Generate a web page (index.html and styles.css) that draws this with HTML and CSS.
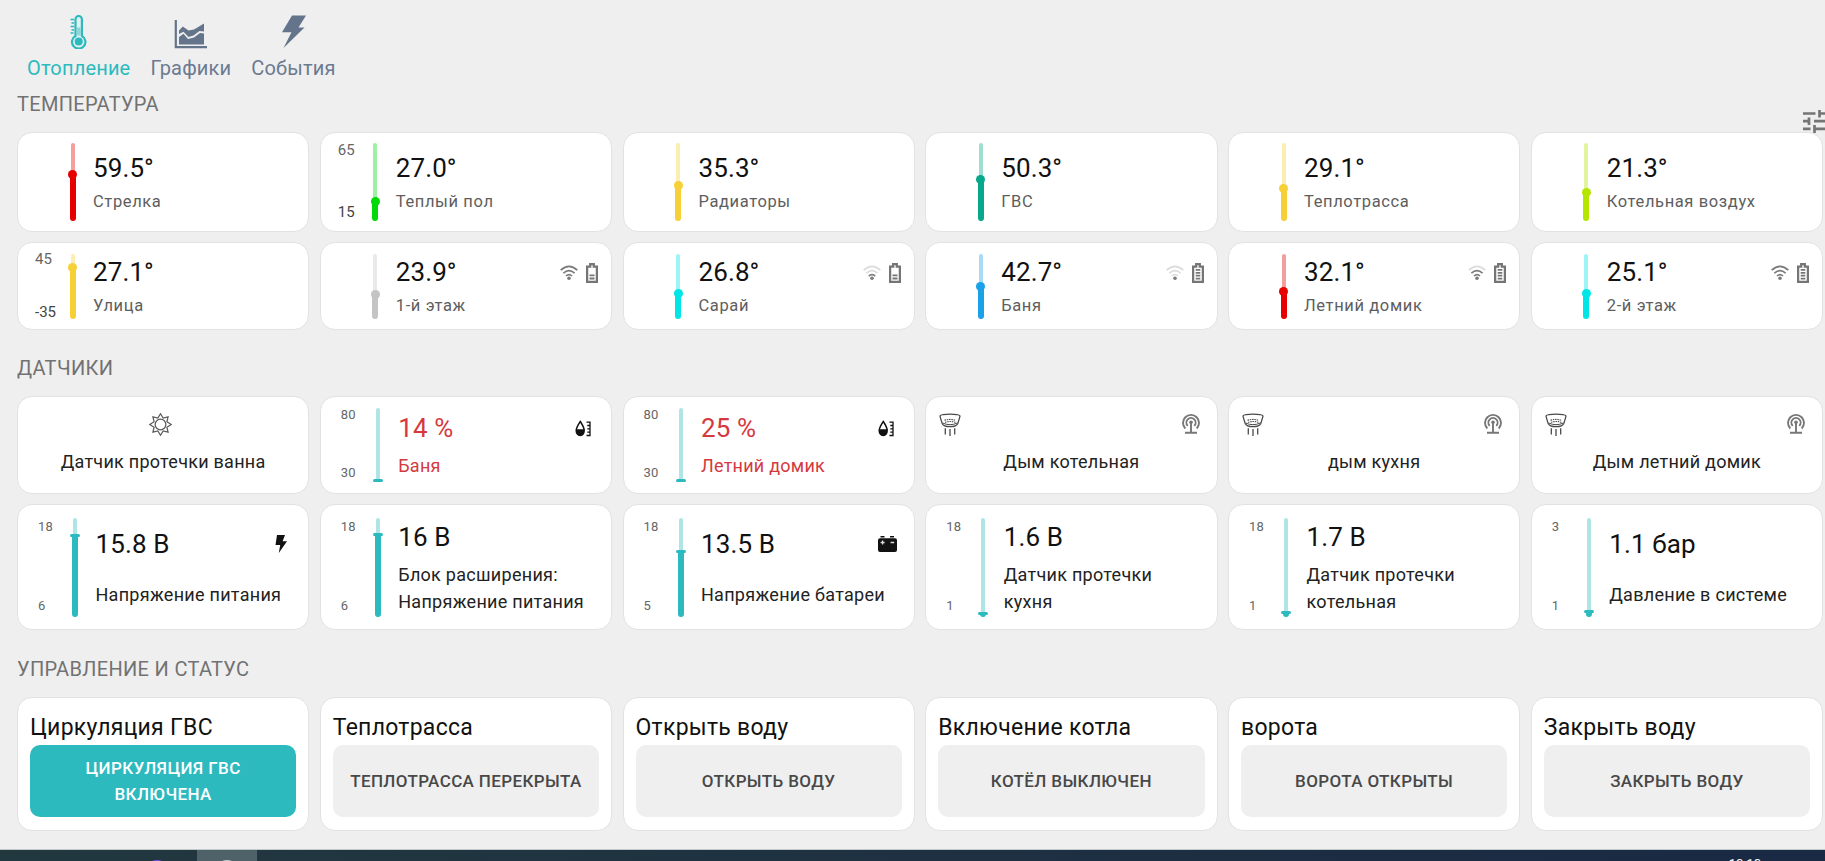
FILE: index.html
```html
<!DOCTYPE html>
<html lang="ru">
<head>
<meta charset="utf-8">
<title>Отопление</title>
<link rel="stylesheet" href="styles.css">
</head>
<body>
<svg class="defs" aria-hidden="true">
  <symbol id="wifi4" viewBox="0 0 18 16"><g fill="none" stroke="#7a7a7a" stroke-width="1.7"><path d="M.7 5.2Q9-2.6 17.3 5.2"/><path d="M3.4 8.2Q9 3 14.6 8.2"/><path d="M6 11Q9 8.2 12 11"/></g><circle cx="9" cy="13.3" r="1.8" fill="#7a7a7a"/></symbol>
  <symbol id="wifi3" viewBox="0 0 18 16"><g fill="none" stroke="#7a7a7a" stroke-width="1.7"><path stroke="#dcdcdc" d="M.7 5.2Q9-2.6 17.3 5.2"/><path d="M3.4 8.2Q9 3 14.6 8.2"/><path d="M6 11Q9 8.2 12 11"/></g><circle cx="9" cy="13.3" r="1.8" fill="#7a7a7a"/></symbol>
  <symbol id="wifi2" viewBox="0 0 18 16"><g fill="none" stroke="#dcdcdc" stroke-width="1.7"><path d="M.7 5.2Q9-2.6 17.3 5.2"/><path d="M3.4 8.2Q9 3 14.6 8.2"/><path stroke="#7a7a7a" d="M5.8 11Q9 8.2 12.2 11"/></g><circle cx="9" cy="13.3" r="1.8" fill="#7a7a7a"/></symbol>
  <symbol id="wifi1" viewBox="0 0 18 16"><g fill="none" stroke="#dcdcdc" stroke-width="1.7"><path d="M.7 5.2Q9-2.6 17.3 5.2"/><path d="M3.4 8.2Q9 3 14.6 8.2"/><path d="M6 11Q9 8.2 12 11"/></g><circle cx="9" cy="13.3" r="1.8" fill="#7a7a7a"/></symbol>
  <symbol id="bat2" viewBox="0 0 12 20"><path d="M4.200 1.200h3.600v2.400H10.900V18.900H1.100V3.600h3.100z" fill="none" stroke="#757575" stroke-width="2.300"/><path d="M3.500 12.400h5M3.500 15.500h5" stroke="#757575" stroke-width="1.800"/></symbol>
  <symbol id="bat4" viewBox="0 0 12 20"><path d="M4.200 1.200h3.600v2.400H10.900V18.900H1.100V3.600h3.100z" fill="none" stroke="#757575" stroke-width="2.300"/><path d="M3.700 6.900h4.600M3.700 9.800h4.600M3.700 12.700h4.600M3.700 15.600h4.600" stroke="#757575" stroke-width="1.700"/></symbol>
  <symbol id="drop" viewBox="0 0 16 17"><path d="M5.300 1.500C7.500 4.800 9.200 7.600 9.200 10.600a4 4.800 0 0 1-8 0C1.200 7.600 3.200 4.800 5.300 1.500z" fill="#fff" stroke="#111" stroke-width="1.500"/><path d="M1.600 9.300h7.400v2.200a3.700 4.300 0 0 1-7.400 0z" fill="#111"/><path d="M11.500 2.200h3.500v13.300h-3.500M12.300 5.500h2.700M12.300 8.800h2.700M12.300 12.100h2.700" fill="none" stroke="#111" stroke-width="1.300"/></symbol>
  <symbol id="bolt" viewBox="0 0 12 18"><path d="M2 0h8L7.600 6.300H12L3.800 18 5.200 10H.5z" fill="#111"/></symbol>
  <symbol id="accum" viewBox="0 0 19 16"><path d="M2 2.300h15a2 2 0 0 1 2 2V14a2 2 0 0 1-2 2H2a2 2 0 0 1-2-2V4.300a2 2 0 0 1 2-2z" fill="#111"/><path d="M2.500 .7h4M12 .7h4" stroke="#111" stroke-width="1.500"/><path d="M2.600 6.500h4M4.600 4.500v4M12.600 6.500h3.600" stroke="#ddd" stroke-width="1.300"/></symbol>
  <symbol id="antenna" viewBox="0 0 18 21"><g fill="none" stroke="#777" stroke-width="1.900"><path d="M3.300 15.500A8 8 0 1 1 14.700 15.500"/><path d="M5.700 12.800A4.600 4.600 0 1 1 12.300 12.800"/><path d="M9 9v10M3 19.800h12"/></g><circle cx="9" cy="9.300" r="1.800" fill="#777"/></symbol>
  <symbol id="smoke" viewBox="0 0 22 23"><g fill="none" stroke="#4a4a4a" stroke-width="1.300"><path d="M1 3.200C1 .3 21 .3 21 3.200Q20 7 18.800 10.500Q17.500 13.700 11 13.700T3.200 10.500Q2 7 1 3.200z"/><path d="M3.600 10Q11 13.400 18.400 10" stroke-width="1"/><path d="M5.500 7.300Q11 5.500 16.500 7.300M6 9.300Q11 7.800 16.500 9.300" stroke-dasharray="1.500 .8" stroke-width="1.100"/><path d="M6.300 15.300v6.200M11 16v7M15.700 15.300v6.200"/></g></symbol>
  <symbol id="sun" viewBox="0 0 24 24"><g fill="none" stroke="#5c5c5c" stroke-width="1.300"><circle cx="12" cy="12" r="5.600"/><path d="M12 .8l2.800 4.500 5.100-1.200-1.200 5.100 4.500 2.800-4.500 2.800 1.200 5.100-5.100-1.200L12 23.200l-2.800-4.500-5.100 1.200 1.200-5.100L.8 12l4.500-2.800-1.200-5.100 5.100 1.200z"/></g></symbol>
</svg>

<nav class="nav">
  <a class="tab active">
    <svg class="tab-icon" width="18" height="34" viewBox="0 0 18 34"><path d="M6.500 21V4.200a3.200 3.200 0 0 1 6.400 0V21a6.700 6.700 0 1 1-6.400 0z" fill="#e3f1f1" stroke="#2cbabf" stroke-width="2.200"/><path d="M7.700 12.500h4v8h-4z" fill="#8fd6d8"/><circle cx="9.700" cy="26.500" r="4" fill="#2cbabf"/><path d="M1.500 4.500h3.500M2.500 8h2.500M1.500 11.500h3.500M2.500 15h2.500M1.500 18h3" stroke="#2cbabf" stroke-width="1.300"/></svg>
    <span>Отопление</span>
  </a>
  <a class="tab">
    <svg class="tab-icon" width="33" height="34" viewBox="0 0 33 34"><path d="M1.800 5v27.200H33" fill="none" stroke="#64748b" stroke-width="2.200"/><path d="M5 19V15.500L8.800 11.500 14.500 15.500 20 14.500 30 8.500V16.500L25.500 16 19.500 20.500 14.500 22 9.500 16.800z" fill="#64748b"/><path d="M5 29.500V22L9.500 18.700 14 24 20 22.500 26 18 30 18.500V29.500z" fill="#64748b"/></svg>
    <span>Графики</span>
  </a>
  <a class="tab">
    <svg class="tab-icon" width="26" height="34" viewBox="0 0 26 34"><path d="M11 .5H25L17.500 12.500H23.500L2.500 33 10.500 17.300H1z" fill="#64748b"/></svg>
    <span>События</span>
  </a>
</nav>

<svg class="tune" width="27" height="23" viewBox="0 0 27 23"><path d="M0 3.500h12.500M16.500 3.500H27M16.500 0v7.500M0 11.200h6M11 11.200H27M6 7.500V15M0 18.800h7.500M11.500 18.800H27M11.500 15v8" fill="none" stroke="#757575" stroke-width="2.700"/></svg>

<main class="page">
  <h2 class="heading">ТЕМПЕРАТУРА</h2>
  <section class="grid temps">
    <article class="card temp"><div class="scale"></div><div class="bar red"><i style="height:46.500px"></i></div><div class="info"><b>59.5°</b><span>Стрелка</span></div></article>
    <article class="card temp"><div class="scale"><em>65</em><em>15</em></div><div class="bar green"><i style="height:19.500px"></i></div><div class="info"><b>27.0°</b><span>Теплый пол</span></div></article>
    <article class="card temp"><div class="scale"></div><div class="bar yellow"><i style="height:36px"></i></div><div class="info"><b>35.3°</b><span>Радиаторы</span></div></article>
    <article class="card temp"><div class="scale"></div><div class="bar emerald"><i style="height:42px"></i></div><div class="info"><b>50.3°</b><span>ГВС</span></div></article>
    <article class="card temp"><div class="scale"></div><div class="bar yellow"><i style="height:32.500px"></i></div><div class="info"><b>29.1°</b><span>Теплотрасса</span></div></article>
    <article class="card temp"><div class="scale"></div><div class="bar lime"><i style="height:28.500px"></i></div><div class="info"><b>21.3°</b><span>Котельная воздух</span></div></article>

    <article class="card temp low"><div class="scale"><em>45</em><em>-35</em></div><div class="bar yellow"><i style="height:51px"></i></div><div class="info"><b>27.1°</b><span>Улица</span></div></article>
    <article class="card temp low"><div class="scale"></div><div class="bar gray"><i style="height:24px"></i></div><div class="info"><b>23.9°</b><span>1-й этаж</span></div><div class="state"><svg width="18" height="16"><use href="#wifi4"/></svg><svg width="12" height="20"><use href="#bat2"/></svg></div></article>
    <article class="card temp low"><div class="scale"></div><div class="bar cyan"><i style="height:25px"></i></div><div class="info"><b>26.8°</b><span>Сарай</span></div><div class="state"><svg width="18" height="16"><use href="#wifi2"/></svg><svg width="12" height="20"><use href="#bat2"/></svg></div></article>
    <article class="card temp low"><div class="scale"></div><div class="bar blue"><i style="height:32px"></i></div><div class="info"><b>42.7°</b><span>Баня</span></div><div class="state"><svg width="18" height="16"><use href="#wifi1"/></svg><svg width="12" height="20"><use href="#bat4"/></svg></div></article>
    <article class="card temp low"><div class="scale"></div><div class="bar red"><i style="height:27px"></i></div><div class="info"><b>32.1°</b><span>Летний домик</span></div><div class="state"><svg width="18" height="16"><use href="#wifi3"/></svg><svg width="12" height="20"><use href="#bat4"/></svg></div></article>
    <article class="card temp low"><div class="scale"></div><div class="bar cyan"><i style="height:25px"></i></div><div class="info"><b>25.1°</b><span>2-й этаж</span></div><div class="state"><svg width="18" height="16"><use href="#wifi4"/></svg><svg width="12" height="20"><use href="#bat4"/></svg></div></article>
  </section>

  <h2 class="heading">ДАТЧИКИ</h2>
  <section class="grid sensors">
    <article class="card alarm"><div class="icons single"><svg width="23" height="23"><use href="#sun"/></svg></div><p>Датчик протечки ванна</p></article>
    <article class="card meter humid"><div class="scale"><em>80</em><em>30</em></div><div class="bar teal"><i style="height:3px"></i></div><div class="info"><b>14 %</b><span>Баня</span></div><svg class="mark" width="16" height="17"><use href="#drop"/></svg></article>
    <article class="card meter humid"><div class="scale"><em>80</em><em>30</em></div><div class="bar teal"><i style="height:3px"></i></div><div class="info"><b>25 %</b><span>Летний домик</span></div><svg class="mark" width="16" height="17"><use href="#drop"/></svg></article>
    <article class="card alarm"><div class="icons"><svg width="22" height="23"><use href="#smoke"/></svg><svg width="18" height="21"><use href="#antenna"/></svg></div><p>Дым котельная</p></article>
    <article class="card alarm"><div class="icons"><svg width="22" height="23"><use href="#smoke"/></svg><svg width="18" height="21"><use href="#antenna"/></svg></div><p>дым кухня</p></article>
    <article class="card alarm"><div class="icons"><svg width="22" height="23"><use href="#smoke"/></svg><svg width="18" height="21"><use href="#antenna"/></svg></div><p>Дым летний домик</p></article>

    <article class="card meter volt"><div class="scale"><em>18</em><em>6</em></div><div class="bar teal"><i style="height:83px"></i></div><div class="info spaced"><b>15.8 В</b><span>Напряжение питания</span></div><svg class="mark bolt" width="12" height="18"><use href="#bolt"/></svg></article>
    <article class="card meter volt"><div class="scale"><em>18</em><em>6</em></div><div class="bar teal"><i style="height:84px"></i></div><div class="info"><b>16 В</b><span>Блок расширения:<br>Напряжение питания</span></div></article>
    <article class="card meter volt"><div class="scale"><em>18</em><em>5</em></div><div class="bar teal"><i style="height:67px"></i></div><div class="info spaced"><b>13.5 В</b><span>Напряжение батареи</span></div><svg class="mark accum" width="19" height="16"><use href="#accum"/></svg></article>
    <article class="card meter volt"><div class="scale"><em>18</em><em>1</em></div><div class="bar teal"><i style="height:5px"></i></div><div class="info"><b>1.6 В</b><span>Датчик протечки<br>кухня</span></div></article>
    <article class="card meter volt"><div class="scale"><em>18</em><em>1</em></div><div class="bar teal"><i style="height:6px"></i></div><div class="info"><b>1.7 В</b><span>Датчик протечки<br>котельная</span></div></article>
    <article class="card meter volt"><div class="scale"><em>3</em><em>1</em></div><div class="bar teal"><i style="height:7px"></i></div><div class="info spaced"><b>1.1 бар</b><span>Давление в системе</span></div></article>
  </section>

  <h2 class="heading">УПРАВЛЕНИЕ И СТАТУС</h2>
  <section class="grid controls">
    <article class="card control"><h3>Циркуляция ГВС</h3><button class="btn on">ЦИРКУЛЯЦИЯ ГВС<br>ВКЛЮЧЕНА</button></article>
    <article class="card control"><h3>Теплотрасса</h3><button class="btn">ТЕПЛОТРАССА ПЕРЕКРЫТА</button></article>
    <article class="card control"><h3>Открыть воду</h3><button class="btn">ОТКРЫТЬ ВОДУ</button></article>
    <article class="card control"><h3>Включение котла</h3><button class="btn">КОТЁЛ ВЫКЛЮЧЕН</button></article>
    <article class="card control"><h3>ворота</h3><button class="btn">ВОРОТА ОТКРЫТЫ</button></article>
    <article class="card control"><h3>Закрыть воду</h3><button class="btn">ЗАКРЫТЬ ВОДУ</button></article>
  </section>
</main>

<footer class="taskbar">
  <div class="app"><i class="purple"></i></div>
  <div class="app current"><i></i></div>
  <time>10:10</time>
</footer>
</body>
</html>
```

FILE: styles.css
```css
* { box-sizing: border-box; }
html, body { height: 100%; }
body {
  margin: 0;
  display: flex;
  flex-direction: column;
  overflow: hidden;
  position: relative;
  background: #efefef;
  color: #111;
  font-family: Roboto, "Noto Sans", sans-serif;
}
.defs { position: absolute; width: 0; height: 0; }
svg { display: block; flex: none; }

.nav { display: flex; gap: 20px; height: 91px; padding: 15px 0 0 27px; flex: none; }
.tab {
  display: flex;
  flex-direction: column;
  align-items: center;
  color: #6b7a90;
  font-size: 20px;
  line-height: 24px;
  letter-spacing: .18px;
}
.tab span { margin-top: 7px; }
.tab.active { color: #2cbabf; }
.tab.active .tab-icon { margin-right: 1px; }

.tune { position: absolute; left: 1803px; top: 110px; z-index: 1; }

.page { padding: 0 2px 0 17px; flex: none; height: 758px; }
.heading {
  margin: 0;
  font-size: 20px;
  font-weight: 400;
  line-height: 26px;
  letter-spacing: .32px;
  color: #727272;
}
.grid {
  display: grid;
  grid-template-columns: repeat(6, minmax(0, 1fr));
  column-gap: 10.500px;
  row-gap: 10px;
}
.temps { grid-template-rows: 100px 88px; margin: 15px 0 25px; }
.sensors { grid-template-rows: 98px 126px; row-gap: 10px; margin: 15px 0 26px; }
.controls { grid-template-rows: 134px; margin: 15px 0 0; }

.card {
  display: flex;
  align-items: center;
  position: relative;
  background: #fff;
  border: 1px solid #e2e2e2;
  border-radius: 15px;
}

.scale { display: flex; flex-direction: column; justify-content: space-between; flex: none; }
.scale em { font-style: normal; }
.temp .scale { margin: 0 0 2px 17px; width: 32.500px; height: 80px; font-size: 15px; line-height: 18px; color: #666; }
.temp.low .scale { height: 71px; }
.temp .scale em:last-child { color: #444; }

.bar { position: relative; width: 10px; flex: none; height: 78px; color: #2cbabf; }
.low .bar { height: 65px; }
.bar::before {
  content: "";
  position: absolute;
  left: 3px; top: 0; bottom: 0;
  width: 4px;
  border-radius: 2px;
  background: currentColor;
  opacity: .38;
}
.bar i {
  position: absolute;
  left: 2px; bottom: 0;
  width: 6px;
  border-radius: 0 0 3px 3px;
  background: currentColor;
}
.temp .bar i::before {
  content: "";
  position: absolute;
  left: -1.500px; top: -4.500px;
  width: 9px; height: 9px;
  border-radius: 50%;
  background: currentColor;
}
.red { color: #e60000; }
.green { color: #00d90a; }
.yellow { color: #f7d038; }
.emerald { color: #08a88a; }
.lime { color: #b4e600; }
.gray { color: #c4c4c4; }
.cyan { color: #00e6e6; }
.blue { color: #1ba1e8; }

.info { display: flex; flex-direction: column; white-space: nowrap; }
.info b { font-weight: 400; font-size: 26px; line-height: 38px; letter-spacing: .1px; }
.info span { font-size: 16.500px; line-height: 30px; color: #5e5e5e; letter-spacing: .62px; }
.temp .info { margin-left: 15.500px; padding-top: 1px; }
.low .info { padding-top: 2px; }

.state { position: absolute; right: 13px; top: 20px; display: flex; align-items: center; gap: 8px; }

.meter .scale { margin: 0 0 2px 20px; width: 32px; height: 74px; font-size: 13px; line-height: 16px; color: #666; letter-spacing: .2px; }
.meter .bar { height: 74px; }
.meter .bar i::before {
  content: "";
  position: absolute;
  left: -2px; top: 0;
  width: 10px; height: 3px;
  border-radius: 2px;
  background: currentColor;
}
.meter .info { margin-left: 15.500px; }
.humid .info { padding-bottom: 2px; }
.humid .info b, .humid .info span { color: #d5393d; }
.humid .info b { line-height: 44px; }
.humid .info span { font-size: 18px; line-height: 32px; letter-spacing: .25px; }
.meter .mark { position: absolute; right: 20px; top: 23px; }
.volt .scale { height: 95px; margin-bottom: 2px; }
.volt .bar { height: 99px; }
.volt .info { padding-bottom: 7px; }
.volt .info b { line-height: 49px; padding-top: 1px; margin-bottom: -1px; }
.volt .info span { font-size: 18px; line-height: 27px; color: #222; letter-spacing: .28px; }
.volt .info.spaced { gap: 13px; }
.volt .bolt { right: 21px; top: 30px; }
.volt .accum { right: 17px; top: 31px; }

.alarm { flex-direction: column; padding-top: 16px; }
.alarm .icons { width: 100%; display: flex; justify-content: space-between; padding: 0 17px 0 13px; height: 23px; }
.alarm .icons.single { justify-content: center; padding: 0 5px 0 0; }
.alarm p { margin: 13px 0 0; font-size: 18px; line-height: 26px; color: #222; letter-spacing: .26px; }

.control { flex-direction: column; align-items: stretch; padding: 14px 12px 12px; }
.control h3 { margin: 0; padding-top: 1px; font-weight: 400; font-size: 23px; line-height: 30px; letter-spacing: .27px; height: 33px; flex: none; }
.btn {
  height: 72px;
  border: 0;
  border-radius: 10px;
  background: #efefef;
  color: #484848;
  font: 500 17px/26px Roboto, "Noto Sans", sans-serif;
  letter-spacing: .38px;
  padding: 0 0 1px;
  white-space: nowrap;
}
.btn.on { background: #2cbabf; color: #fff; }

.taskbar {
  height: 12px;
  flex: none;
  display: flex;
  overflow: hidden;
  border-top: 1px solid #c3c9cb;
  background: linear-gradient(90deg, #22383f, #1a2944);
}
.app { width: 60.500px; margin-left: 136px; height: 11px; display: flex; justify-content: center; align-items: flex-start; }
.app + .app { margin-left: 0; }
.app i { width: 24px; height: 24px; border-radius: 50%; margin-top: 10px; background: #c9cfd2; flex: none; }
.app i.purple { background: #7b4df0; margin-right: 18px; }
.app.current { background: #4f6269; }
.taskbar time { margin: 6px 64px 0 auto; color: #fff; font-size: 13px; line-height: 16px; }
```
